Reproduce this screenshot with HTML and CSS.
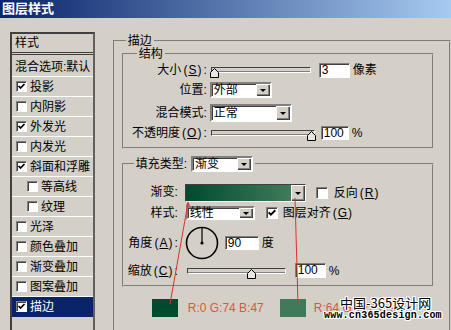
FILE: index.html
```html
<!DOCTYPE html>
<html lang="zh-CN">
<head>
    <meta charset="UTF-8">
    <title>图层样式</title>
    <link rel="stylesheet" href="styles.css">
</head>
<body>
    <div class="titlebar">图层样式</div>

    <div class="main">
        <!-- Style list -->
        <div class="layer-list">
            <div class="list-head">样式</div>
            <div class="list-row plain">混合选项:默认</div>
            <div class="list-row"><span class="check"><svg viewBox="0 0 9 9"><polyline points="1.5,4 3.5,6 7.5,2"/></svg></span>投影</div>
            <div class="list-row"><span class="check"></span>内阴影</div>
            <div class="list-row"><span class="check"><svg viewBox="0 0 9 9"><polyline points="1.5,4 3.5,6 7.5,2"/></svg></span>外发光</div>
            <div class="list-row"><span class="check"></span>内发光</div>
            <div class="list-row"><span class="check"><svg viewBox="0 0 9 9"><polyline points="1.5,4 3.5,6 7.5,2"/></svg></span>斜面和浮雕</div>
            <div class="list-row sub"><span class="check"></span>等高线</div>
            <div class="list-row sub"><span class="check"></span>纹理</div>
            <div class="list-row"><span class="check"></span>光泽</div>
            <div class="list-row"><span class="check"></span>颜色叠加</div>
            <div class="list-row"><span class="check"></span>渐变叠加</div>
            <div class="list-row"><span class="check"></span>图案叠加</div>
            <div class="list-row selected"><span class="check"><svg viewBox="0 0 9 9"><polyline points="1.5,4 3.5,6 7.5,2"/></svg></span>描边</div>
        </div>

        <!-- Stroke settings -->
        <fieldset class="group outer">
            <legend>描边</legend>

            <fieldset class="group structure">
                <legend>结构</legend>
                <div class="row">
                    <span class="lbl">大小<span class="mn">(<u>S</u>)</span>:</span>
                    <div class="slider s-size"><span class="thumb" style="left:-2px"><svg viewBox="0 0 9 10"><polygon points="0.5,4.5 4.5,0.5 8.5,4.5 8.5,9.5 0.5,9.5"/></svg></span></div>
                    <span class="field f-size">3</span>
                    <span class="unit">像素</span>
                </div>
                <div class="row">
                    <span class="lbl">位置:</span>
                    <div class="select sel-pos"><span class="select-text">外部</span><span class="select-btn"><i></i></span></div>
                </div>
                <div class="row row-gap">
                    <span class="lbl">混合模式:</span>
                    <div class="select sel-mode"><span class="select-text">正常</span><span class="select-btn"><i></i></span></div>
                </div>
                <div class="row">
                    <span class="lbl">不透明度<span class="mn">(<u>O</u>)</span>:</span>
                    <div class="slider s-opacity"><span class="thumb" style="left:95px"><svg viewBox="0 0 9 10"><polygon points="0.5,4.5 4.5,0.5 8.5,4.5 8.5,9.5 0.5,9.5"/></svg></span></div>
                    <span class="field f-opacity">100</span>
                    <span class="unit">%</span>
                </div>
            </fieldset>

            <fieldset class="group fill">
                <legend><span>填充类型:</span><div class="select sel-fill"><span class="select-text">渐变</span><span class="select-btn"><i></i></span></div></legend>
                <div class="row r-grad">
                    <span class="lbl">渐变:</span>
                    <div class="gradient"><span class="gradient-bar"></span><span class="select-btn"><i></i></span></div>
                    <span class="check big"></span>
                    <span class="opt">反向<span class="mn">(<u>R</u>)</span></span>
                </div>
                <div class="row r-style">
                    <span class="lbl">样式:</span>
                    <div class="select sel-style"><span class="select-text">线性</span><span class="select-btn"><i></i></span></div>
                    <span class="check big"><svg viewBox="0 0 9 9"><polyline points="1.5,4 3.5,6 7.5,2"/></svg></span>
                    <span class="opt opt-align">图层对齐<span class="mn">(<u>G</u>)</span></span>
                </div>
                <div class="row r-angle">
                    <span class="lbl">角度<span class="mn">(<u>A</u>)</span>:</span>
                    <svg class="dial" viewBox="0 0 34 34">
                        <circle cx="17" cy="17" r="15.5" fill="none" stroke="#000" stroke-width="1.6"/>
                        <line x1="17" y1="17" x2="17" y2="2" stroke="#000" stroke-width="1.2"/>
                        <circle cx="17" cy="17" r="1.6" fill="#000"/>
                    </svg>
                    <span class="field f-angle">90</span>
                    <span class="unit">度</span>
                </div>
                <div class="row r-scale">
                    <span class="lbl">缩放<span class="mn">(<u>C</u>)</span>:</span>
                    <div class="slider s-scale"><span class="thumb" style="left:59px"><svg viewBox="0 0 9 10"><polygon points="0.5,4.5 4.5,0.5 8.5,4.5 8.5,9.5 0.5,9.5"/></svg></span></div>
                    <span class="field f-scale">100</span>
                    <span class="unit">%</span>
                </div>
            </fieldset>

            <!-- Gradient end colours -->
            <div class="swatches">
                <span class="swatch sw-start"></span>
                <span class="rgb rgb-start">R:0 G:74 B:47</span>
                <span class="swatch sw-end"></span>
                <span class="rgb">R:64 G:122 B:90</span>
            </div>
        </fieldset>
    </div>

    <!-- Annotation lines -->
    <svg class="annotations" viewBox="0 0 451 330">
        <line x1="188" y1="203" x2="170" y2="304" />
        <line x1="295" y1="198" x2="298" y2="304" />
        <polygon points="188,201 186,206 190,206" />
    </svg>

    <div class="watermark">
        <div class="wm-title">中国-365设计网</div>
        <div class="wm-url">www.cn365design.com</div>
    </div>
</body>
</html>
```

FILE: styles.css
```css
/* General */
* {
    margin: 0;
    padding: 0;
    box-sizing: border-box;
}

html, body {
    width: 451px;
    height: 330px;
    overflow: hidden;
}

body {
    position: relative;
    background-color: #d4d0c8;
    font-family: "Liberation Sans", "Noto Sans CJK SC", sans-serif;
    font-size: 12px;
    line-height: 14px;
    color: #000;
}

u {
    text-decoration: underline;
}

/* Title bar */
.titlebar {
    height: 18px;
    padding-left: 2px;
    background: linear-gradient(to right, #0a246a, #a6caf0);
    color: #fff;
    font-size: 13px;
    font-weight: bold;
    line-height: 18px;
}

.main {
    display: flex;
    align-items: flex-start;
}

/* Style list */
.layer-list {
    width: 87px;
    height: 312px;
    margin: 14px 0 0 10px;
    border: 2px solid;
    border-color: #404040 #606060 #606060 #404040;
}

.list-head {
    height: 21px;
    padding-left: 3px;
    line-height: 18px;
    border-bottom: 3px double #404040;
    margin-bottom: 2px;
}

.list-row {
    display: flex;
    align-items: center;
    height: 20px;
    padding-left: 4px;
    border-bottom: 1px solid #fff;
}

.list-row.plain {
    padding-left: 3px;
}

.list-row.sub {
    padding-left: 15px;
}

.list-row.selected {
    background-color: #0a246a;
    color: #fff;
    border-bottom-color: #0a246a;
}

/* Checkboxes */
.check {
    flex: none;
    width: 11px;
    height: 11px;
    margin-right: 3px;
    background-color: #fff;
    border: 1px solid;
    border-color: #808080 #fff #fff #808080;
    box-shadow: inset 1px 1px 0 #404040;
}

.check.big {
    width: 12px;
    height: 12px;
}

.check svg {
    display: block;
    width: 100%;
    height: 100%;
    fill: none;
    stroke: #000;
    stroke-width: 1.7;
}

/* Group boxes */
.group {
    border: 2px groove #d4d0c8;
    min-width: 0;
}

.group legend {
    padding: 0 2px;
}

.outer {
    width: 347px;
    height: 295px;
    margin: 17px 0 0 18px;
    padding: 0 15px 0 7px;
    border-bottom: 0;
}

.outer > legend {
    margin-left: 4px;
    line-height: 12px;
}

.structure {
    margin-top: 1px;
    padding: 0 0 4px 2px;
}

.structure > legend {
    margin-left: 11px;
    line-height: 12px;
}

.fill {
    margin-top: 7px;
    padding: 12px 0 7px 2px;
}

.fill > legend {
    display: flex;
    align-items: center;
    margin-left: 8px;
    line-height: 16px;
}

/* Rows */
.row {
    display: flex;
    align-items: center;
    height: 20px;
    white-space: nowrap;
}

.row-gap {
    margin-top: 3px;
}

.lbl {
    flex: none;
    width: 81px;
    margin-right: 3px;
    text-align: right;
}

.fill .lbl {
    width: 52px;
    margin-right: 7px;
}

.mn {
    margin: 0 1px 0 2px;
    letter-spacing: 1px;
}

.unit {
    margin-left: 3px;
}

/* Text fields */
.field {
    flex: none;
    height: 15px;
    padding-left: 2px;
    background-color: #fff;
    border: 1px solid;
    border-color: #808080 #fff #fff #808080;
    box-shadow: inset 1px 1px 0 #404040;
    font-size: 12px;
    line-height: 13px;
}

.f-size { width: 31px; margin-left: 8px; }
.f-opacity { width: 28px; margin-left: 6px; height: 14px; line-height: 12px; }
.f-angle { width: 34px; margin-left: 6px; height: 14px; line-height: 12px; }
.f-scale { width: 31px; margin-left: 9px; }

/* Sliders */
.slider {
    position: relative;
    flex: none;
    height: 6px;
    margin-left: 1px;
    background-color: #d4d0c8;
    border: 1px solid;
    border-color: #404040 #fff #fff #404040;
    box-shadow: inset 0 -1px 0 #808080;
}

.s-size { width: 100px; }
.s-opacity { width: 104px; }
.s-scale { width: 99px; margin-left: 2px; }

.thumb {
    position: absolute;
    top: 0;
    width: 9px;
    height: 10px;
}

.thumb svg {
    display: block;
    width: 9px;
    height: 10px;
    fill: #e8e6e0;
    stroke: #000;
    stroke-width: 1;
}

/* Dropdowns */
.select {
    display: flex;
    flex: none;
    background-color: #fff;
    border: 2px solid;
    border-color: #808080 #fff #fff #808080;
    box-shadow: inset 1px 1px 0 #404040;
}

.select-text {
    flex: 1;
    padding-left: 2px;
    line-height: 12px;
}

.select-btn {
    display: flex;
    align-items: center;
    justify-content: center;
    flex: none;
    width: 14px;
    background-color: #d4d0c8;
    box-shadow: inset 1px 1px 0 #fff, inset -1px -1px 0 #404040, inset -2px -2px 0 #808080;
}

.select-btn i {
    width: 0;
    height: 0;
    border-left: 3px solid transparent;
    border-right: 3px solid transparent;
    border-top: 3px solid #000;
}

.sel-pos { width: 62px; height: 16px; }
.sel-mode { width: 82px; height: 18px; }
.sel-mode .select-text { line-height: 14px; }
.sel-fill { width: 62px; height: 16px; margin-left: 4px; }
.sel-style { width: 69px; height: 14px; margin-left: 1px; }
.sel-style .select-text { line-height: 10px; }

/* Fill rows */
.r-grad { height: 18px; }

.gradient {
    display: flex;
    flex: none;
    width: 121px;
    height: 18px;
    border: 1px solid;
    border-color: #404040 #fff #fff #404040;
}

.gradient-bar {
    flex: 1;
    background: linear-gradient(to right, #004a2f, #407a5a);
}

.r-grad .lbl {
    padding-bottom: 3px;
}

.r-grad .check {
    margin-left: 10px;
    margin-right: 6px;
}

.r-style {
    height: 14px;
    margin-top: 4px;
}

.r-style .check {
    margin-left: 11px;
    margin-right: 5px;
}

.r-angle {
    height: 33px;
    margin-top: 6px;
}

.dial {
    flex: none;
    width: 34px;
    height: 34px;
}

.r-scale {
    height: 15px;
    margin-top: 4px;
}

/* Swatches */
.swatches {
    display: flex;
    align-items: center;
    height: 18px;
    margin-top: 12px;
    padding-left: 30px;
}

.swatch {
    flex: none;
    width: 26px;
    height: 18px;
}

.sw-start { background-color: #004a2f; }
.sw-end { background-color: #407a5a; }

.rgb {
    margin-left: 8px;
    color: #d8583e;
    font-size: 12px;
}

.rgb-start {
    width: 92px;
    margin-left: 10px;
}

/* Overlays */
.annotations {
    position: absolute;
    left: 0;
    top: 0;
    width: 451px;
    height: 330px;
    pointer-events: none;
}

.annotations line {
    stroke: #e0302c;
    stroke-width: 1;
}

.annotations polygon {
    fill: #e0302c;
}

.watermark {
    position: absolute;
    left: 324px;
    top: 295px;
    color: #000;
    text-shadow: 1px 0 0 #fff, -1px 0 0 #fff, 0 1px 0 #fff, 0 -1px 0 #fff,
                 1px 1px 0 #fff, -1px -1px 0 #fff, 1px -1px 0 #fff, -1px 1px 0 #fff;
}

.wm-title {
    padding-left: 16px;
    font-family: "Noto Sans CJK SC", sans-serif;
    font-size: 13px;
    line-height: 15px;
}

.wm-url {
    font-family: "Liberation Mono", monospace;
    font-weight: bold;
    font-size: 10px;
    line-height: 12px;
    letter-spacing: 0.2px;
}
```
